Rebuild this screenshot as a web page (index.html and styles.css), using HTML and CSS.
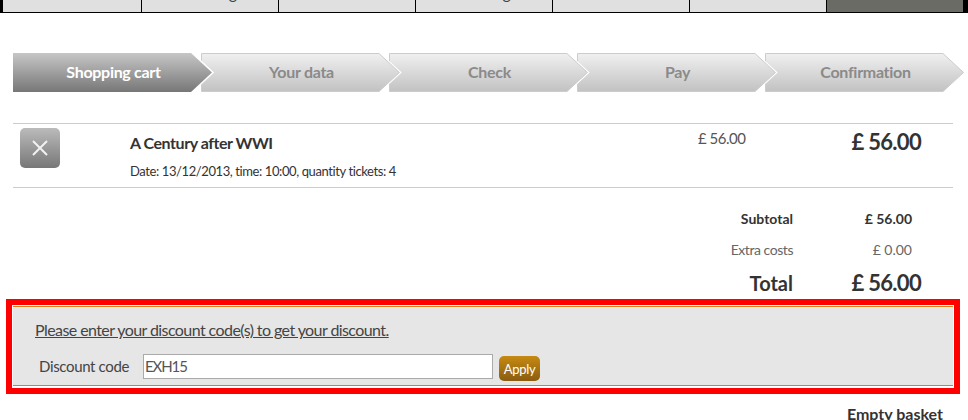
FILE: index.html
```html
<!DOCTYPE html>
<html lang="en">
<head>
<meta charset="utf-8">
<title>Shopping cart</title>
<link rel="stylesheet" href="styles.css">
</head>
<body>
<svg class="defs" width="0" height="0" aria-hidden="true">
  <defs>
    <linearGradient id="stepOn" x1="0" y1="0" x2="0" y2="1"><stop offset="0" stop-color="#c6c6c6"/><stop offset="1" stop-color="#777"/></linearGradient>
    <linearGradient id="stepOff" x1="0" y1="0" x2="0" y2="1"><stop offset="0" stop-color="#f0f0f0"/><stop offset="1" stop-color="#c2c2c2"/></linearGradient>
  </defs>
</svg>
<nav class="nav">
  <a class="nav-cell"><span>Museum</span></a>
  <a class="nav-cell nav-cell-g"><span>Planning</span></a>
  <a class="nav-cell"><span>Collections</span></a>
  <a class="nav-cell nav-cell-g"><span>Learning</span></a>
  <a class="nav-cell"><span>Visit</span></a>
  <a class="nav-cell"><span>Contact</span></a>
  <a class="nav-cell nav-cell-active"><span>Basket</span></a>
</nav>
<main class="page">
  <ol class="steps">
    <li class="step step-active"><svg class="step-bg" viewBox="0 0 199 39"><polygon class="halo" points="0,0 178,0 199,19.5 178,39 0,39"/><polygon fill="url(#stepOn)" points="0,0 178,0 199,19.5 178,39 0,39"/></svg><span>Shopping cart</span></li>
    <li class="step"><svg class="step-bg" viewBox="0 0 199 39"><polygon class="halo" points="0.5,0.5 178,0.5 198.5,19.5 178,38.5 0.5,38.5"/><polygon class="edge" fill="url(#stepOff)" points="0.5,0.5 178,0.5 198.5,19.5 178,38.5 0.5,38.5"/></svg><span>Your data</span></li>
    <li class="step"><svg class="step-bg" viewBox="0 0 199 39"><polygon class="halo" points="0.5,0.5 178,0.5 198.5,19.5 178,38.5 0.5,38.5"/><polygon class="edge" fill="url(#stepOff)" points="0.5,0.5 178,0.5 198.5,19.5 178,38.5 0.5,38.5"/></svg><span>Check</span></li>
    <li class="step"><svg class="step-bg" viewBox="0 0 199 39"><polygon class="halo" points="0.5,0.5 178,0.5 198.5,19.5 178,38.5 0.5,38.5"/><polygon class="edge" fill="url(#stepOff)" points="0.5,0.5 178,0.5 198.5,19.5 178,38.5 0.5,38.5"/></svg><span>Pay</span></li>
    <li class="step"><svg class="step-bg" viewBox="0 0 199 39"><polygon class="halo" points="0.5,0.5 178,0.5 198.5,19.5 178,38.5 0.5,38.5"/><polygon class="edge" fill="url(#stepOff)" points="0.5,0.5 178,0.5 198.5,19.5 178,38.5 0.5,38.5"/></svg><span>Confirmation</span></li>
  </ol>
  <div class="item">
    <button class="remove" aria-label="Remove"><svg viewBox="0 0 16 16" width="16" height="16"><path d="M1 1 15 15M15 1 1 15"/></svg></button>
    <div class="item-info">
      <h2 class="item-title">A Century after WWI</h2>
      <p class="item-meta">Date: 13/12/2013, time: 10:00, quantity tickets: 4</p>
    </div>
    <div class="item-price">£ 56.00</div>
    <div class="item-total">£ 56.00</div>
  </div>
  <div class="totals">
    <div class="total-row total-sub"><span class="total-label">Subtotal</span><span class="total-value">£ 56.00</span></div>
    <div class="total-row total-extra"><span class="total-label">Extra costs</span><span class="total-value">£ 0.00</span></div>
    <div class="total-row total-grand"><span class="total-label">Total</span><span class="total-value">£ 56.00</span></div>
  </div>
</main>
<section class="discount-frame">
  <div class="discount">
    <a class="discount-link">Please enter your discount code(s) to get your discount.</a>
    <div class="discount-form">
      <label class="discount-label">Discount code</label>
      <input class="discount-input" type="text" value="EXH15">
      <button class="apply">Apply</button>
    </div>
  </div>
</section>
<div class="empty"><a class="empty-link">Empty basket</a></div>
</body>
</html>
```
FILE: styles.css
```css
* { box-sizing: border-box; }
html, body { margin: 0; padding: 0; }
body {
  width: 968px;
  height: 420px;
  overflow: hidden;
  background: #fff;
  color: #333;
  font-family: Lato, "Open Sans", sans-serif;
}
.defs { display: block; height: 0; }
.nav {
  display: flex;
  height: 13px;
  padding: 0 6px 1px 3px;
  background: #000;
}
.nav-cell {
  flex: 0 0 137px;
  overflow: hidden;
  display: flex;
  align-items: flex-end;
  justify-content: center;
  border-right: 1px solid #000;
  background: #e0e0e0;
  color: #444;
  font-size: 16px;
}
.nav-cell span { line-height: 16px; padding-bottom: 11px; }
.nav-cell-g span { padding-right: 6px; }
.nav-cell:first-child { flex-basis: 139px; }
.nav-cell-active { flex-basis: 136px; background: #6b6b65; border-right: 0; color: #eee; }
.page { padding: 40px 15px 0 13px; }
.steps {
  display: flex;
  list-style: none;
  margin: 0;
  padding: 0;
  height: 39px;
}
.step {
  position: relative;
  flex: 0 0 199px;
  margin-right: -11px;
  display: flex;
  align-items: center;
  justify-content: center;
  color: #8a8a8a;
  font-size: 16px;
  font-weight: 700;
  letter-spacing: -0.3px;
}
.step:nth-child(1) { z-index: 5; }
.step:nth-child(2) { z-index: 4; }
.step:nth-child(3) { z-index: 3; }
.step:nth-child(4) { z-index: 2; }
.step:nth-child(5) { z-index: 1; }
.step span { position: relative; padding: 0 0 3px 2px; }
.step-bg { position: absolute; inset: 0; width: 199px; height: 39px; overflow: visible; }
.halo { fill: none; stroke: #fff; stroke-width: 3; }
.edge { stroke: #ccc; stroke-width: 1; }
.step-active { color: #fff; }
.item {
  display: flex;
  align-items: flex-start;
  margin-top: 31px;
  height: 65px;
  border-top: 1px solid #ccc;
  border-bottom: 1px solid #ccc;
  width: 940px;
}
.remove {
  flex: 0 0 40px;
  height: 40px;
  margin: 4px 0 0 7px;
  padding: 0;
  border: 0;
  border-radius: 5px;
  background: linear-gradient(#bbb, #777);
  display: flex;
  align-items: center;
  justify-content: center;
}
.remove path { fill: none; stroke: #f2f2f2; stroke-width: 2; }
.item-info { flex: 0 0 568px; margin-left: 70px; }
.item-title { margin: 9px 0 0; font-size: 16px; line-height: 20px; font-weight: 700; letter-spacing: -0.45px; }
.item-meta { margin: 9px 0 0; font-size: 13px; line-height: 18px; letter-spacing: -0.4px; }
.item-price { flex: 0 0 113px; margin-top: 4px; font-size: 15px; line-height: 20px; letter-spacing: -0.5px; color: #555; }
.item-total { flex: 0 0 110px; margin-top: 5px; text-align: right; font-size: 22px; line-height: 26px; font-weight: 700; letter-spacing: -0.7px; }
.totals { width: 899px; }
.total-row { display: flex; justify-content: flex-end; align-items: baseline; }
.total-label { text-align: right; }
.total-value { flex: 0 0 119px; text-align: right; }
.total-sub { margin-top: 21px; font-size: 14px; line-height: 20px; font-weight: 700; }
.total-extra { margin-top: 11px; font-size: 14px; line-height: 20px; color: #666; }
.total-extra .total-label { letter-spacing: -0.45px; }
.total-grand { margin-top: 10px; font-size: 20px; line-height: 26px; font-weight: 700; }
.total-grand .total-value { margin-right: -9px; font-size: 22px; letter-spacing: -0.7px; flex-basis: 128px; }
.discount-frame {
  margin: 3px 0 0 6px;
  width: 954px;
  height: 95px;
  border: 6px solid #f00;
  padding: 1px 1px 2px;
  background: #fff;
}
.discount {
  height: 80px;
  background: #e6e6e6;
  border-top: 1px solid #c8861e;
  border-bottom: 1px solid #c8861e;
  padding: 13px 0 0 22px;
}
.discount-link { display: block; font-size: 16px; line-height: 20px; letter-spacing: -0.58px; text-decoration: underline; color: #444; }
.discount-form { display: flex; align-items: flex-start; margin-top: 14px; }
.discount-label { flex: 0 0 108px; padding: 2px 0 0 4px; font-size: 15px; line-height: 20px; letter-spacing: -0.35px; color: #444; white-space: nowrap; }
.discount-input {
  width: 350px;
  height: 25px;
  border: 1px solid #aaa;
  padding: 0 1px 1px;
  font: 15px Lato, sans-serif;
  letter-spacing: -1.1px;
  color: #555;
  background: #fff;
}
.apply {
  margin: 2px 0 0 6px;
  width: 41px;
  height: 25px;
  padding: 0;
  border: 0;
  border-radius: 5px;
  background: linear-gradient(#c68a12, #8a5c10);
  color: #fff;
  font: 13px Lato, sans-serif;
  letter-spacing: -0.3px;
}
.empty { margin: 10px 25px 0 0; text-align: right; font-size: 16px; line-height: 20px; font-weight: 700; }
```
